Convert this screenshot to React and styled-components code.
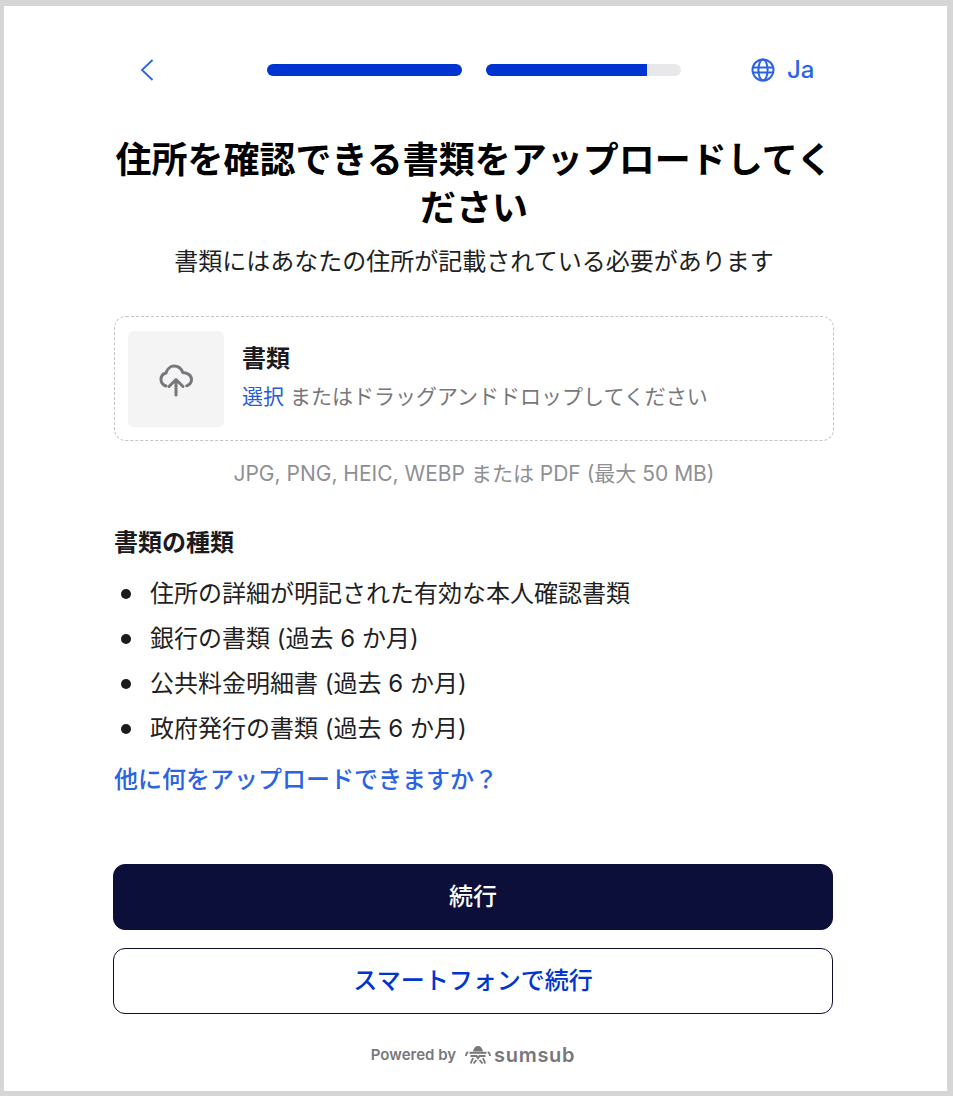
import React from "react"
import styled, { createGlobalStyle } from "styled-components"

const GlobalStyle = createGlobalStyle`
  html, body {
    margin: 0;
    padding: 0;
    background: #d6d6d6;
  }
  * {
    box-sizing: border-box;
  }
`

const Frame = styled.div`
  width: 953px;
  height: 1096px;
  padding: 6px 6px 5px 4px;
  font-family: Inter, "Noto Sans CJK JP", sans-serif;
  color: #1a1a1f;
`

const Card = styled.main`
  height: 1085px;
  background: #fff;
  padding: 46px 114px 0 109px;
  display: flex;
  flex-direction: column;
`

const TopBar = styled.header`
  display: flex;
  align-items: center;
  height: 36px;
`

const BackButton = styled.button`
  width: 154px;
  height: 36px;
  padding: 0 0 0 27px;
  border: 0;
  background: none;
  color: #2a63e4;
  display: flex;
  align-items: center;
`

const Steps = styled.div`
  display: flex;
  gap: 24px;
`

const Step = styled.div`
  width: 195px;
  height: 12px;
  border-radius: 6px;
  background: #e8e8ea;
  overflow: hidden;
`

const StepFill = styled.div`
  height: 100%;
  background: #0034d1;
`

const Lang = styled.div`
  margin-left: 70px;
  display: flex;
  align-items: center;
  gap: 12px;
  color: #2a63e4;
  font-size: 24px;
  font-weight: 500;
  line-height: 36px;
`

const Title = styled.h1`
  margin: 48px 0 0;
  padding-left: 2px;
  font-size: 36px;
  line-height: 48px;
  font-weight: 700;
  text-align: center;
  color: #000;
`

const Subtitle = styled.p`
  margin: 12px 0 0;
  padding-left: 2px;
  font-size: 24px;
  line-height: 36px;
  text-align: center;
  color: #1f1f24;
`

const DropZone = styled.section`
  margin: 36px 0 0 1px;
  width: 720px;
  height: 125px;
  padding: 14px 13px;
  display: flex;
  align-items: flex-start;
  gap: 18px;
  border: 1px dashed #c4c4c8;
  border-radius: 12px;
`

const Thumb = styled.div`
  width: 96px;
  height: 96px;
  border-radius: 6px;
  background: #f4f4f5;
  color: #77777c;
  display: flex;
  align-items: center;
  justify-content: center;
  flex-shrink: 0;
`

const DropText = styled.div`
  padding-top: 10px;
`

const DropLabel = styled.div`
  font-size: 24px;
  line-height: 36px;
  font-weight: 700;
`

const DropHint = styled.div`
  margin-top: 2px;
  font-size: 21px;
  line-height: 36px;
  color: #77777c;
`

const Pick = styled.span`
  color: #2a5bd7;
`

const Formats = styled.p`
  margin: 15px 0 0;
  padding-left: 2px;
  font-size: 21px;
  line-height: 36px;
  text-align: center;
  color: #8f8f94;
`

const SectionHeading = styled.h2`
  margin: 33px 0 0 1px;
  font-size: 24px;
  line-height: 36px;
  font-weight: 700;
`

const DocList = styled.ul`
  margin: 10px 0 0;
  padding: 0;
  list-style: none;
`

const DocItem = styled.li`
  height: 45px;
  display: flex;
  align-items: center;
  gap: 19px;
  padding-left: 8px;
  font-size: 24px;
  line-height: 36px;
  color: #1f1f24;
  &::before {
    content: "";
    width: 10px;
    height: 10px;
    border-radius: 50%;
    background: #1a1a1f;
    flex-shrink: 0;
  }
`

const MoreLink = styled.a`
  margin: 11px 0 0 1px;
  font-size: 24px;
  font-weight: 500;
  line-height: 36px;
  color: #2a63e4;
  text-decoration: none;
`

const Actions = styled.div`
  margin-top: 66px;
  display: flex;
  flex-direction: column;
  gap: 18px;
`

const ActionButton = styled.button`
  width: 720px;
  height: 66px;
  padding: 0 0 ${p => (p.$primary ? "5px" : "6px")};
  border-radius: 12px;
  font-family: inherit;
  font-size: 24px;
  font-weight: 500;
  border: 1px solid ${p => (p.$primary ? "#0c0f3a" : "#0c0f2a")};
  background: ${p => (p.$primary ? "#0c0f3a" : "#fff")};
  color: ${p => (p.$primary ? "#fff" : "#0034d1")};
`

const Footer = styled.footer`
  margin-top: 29px;
  display: flex;
  align-items: center;
  justify-content: center;
  color: #77777c;
`

const PoweredBy = styled.span`
  margin-right: 9px;
  font-size: 15px;
  line-height: 24px;
  font-weight: 600;
`

const Brand = styled.span`
  margin-left: 3px;
  font-size: 20px;
  line-height: 24px;
  font-weight: 600;
  letter-spacing: 0.7px;
`

const ChevronLeft = () => (
  <svg width="14" height="22" viewBox="0 0 14 22" fill="none" stroke="currentColor" strokeWidth="1.8">
    <path d="M12.5 1 2 11l10.5 10" />
  </svg>
)

const Globe = () => (
  <svg width="24" height="24" viewBox="0 0 24 24" fill="none" stroke="currentColor" strokeWidth="2">
    <circle cx="12" cy="12" r="10.5" />
    <ellipse cx="12" cy="12" rx="4.6" ry="10.5" />
    <path d="M2 9.5h20M2 14.5h20" />
  </svg>
)

const CloudUpload = () => (
  <svg width="36" height="36" viewBox="0 0 36 36" fill="none" stroke="currentColor" strokeWidth="3" strokeLinecap="round" strokeLinejoin="round">
    <path d="M8 25C5 24 3 22 3 18.5c0-3.4 2.300-5.800 5-6.500C9.200 8 12.500 5 16 5c4.300 0 7.400 2.900 8.800 6.500 4.600.2 8.700 2.800 8.700 7 0 3-1.900 5.300-4.800 6.300" />
    <path d="M18 34V19M11 25.500l7-7 7 7" />
  </svg>
)

const SumsubMark = () => (
  <svg width="26" height="18" viewBox="0 0 26 18" fill="none" stroke="currentColor">
    <path d="M8 5.500C8.500 2 10.500 0 13 0s4.500 2 5 5.500z" fill="currentColor" stroke="none" />
    <path d="M4.500 6.800h17" strokeWidth="2" />
    <path d="M1 10c0-2 .8-3.400 2.200-4M25 10c0-2-.8-3.400-2.200-4" strokeWidth="1.800" />
    <path d="M5.500 10h6l1.500 2.200 1.500-2.200h6" strokeWidth="2" />
    <path d="M8 12l-2.300 5.500M18 12l2.300 5.500M11.500 14l-3 3.500M14.500 14l3 3.500" strokeWidth="1.800" />
  </svg>
)

const DOCUMENTS = [
  "住所の詳細が明記された有効な本人確認書類",
  "銀行の書類 (過去 6 か月)",
  "公共料金明細書 (過去 6 か月)",
  "政府発行の書類 (過去 6 か月)",
]

const App = () => (
  <Frame>
    <GlobalStyle />
    <Card>
      <TopBar>
        <BackButton aria-label="戻る">
          <ChevronLeft />
        </BackButton>
        <Steps>
          <Step>
            <StepFill style={{ width: "100%" }} />
          </Step>
          <Step>
            <StepFill style={{ width: "82.5%" }} />
          </Step>
        </Steps>
        <Lang>
          <Globe />
          Ja
        </Lang>
      </TopBar>

      <Title>住所を確認できる書類をアップロードしてください</Title>
      <Subtitle>書類にはあなたの住所が記載されている必要があります</Subtitle>

      <DropZone>
        <Thumb>
          <CloudUpload />
        </Thumb>
        <DropText>
          <DropLabel>書類</DropLabel>
          <DropHint>
            <Pick>選択</Pick> またはドラッグアンドドロップしてください
          </DropHint>
        </DropText>
      </DropZone>
      <Formats>JPG, PNG, HEIC, WEBP または PDF (最大 50 MB)</Formats>

      <SectionHeading>書類の種類</SectionHeading>
      <DocList>
        {DOCUMENTS.map(doc => (
          <DocItem key={doc}>{doc}</DocItem>
        ))}
      </DocList>
      <MoreLink href="#">他に何をアップロードできますか？</MoreLink>

      <Actions>
        <ActionButton $primary>続行</ActionButton>
        <ActionButton>スマートフォンで続行</ActionButton>
      </Actions>

      <Footer>
        <PoweredBy>Powered by</PoweredBy>
        <SumsubMark />
        <Brand>sumsub</Brand>
      </Footer>
    </Card>
  </Frame>
)

export default App
